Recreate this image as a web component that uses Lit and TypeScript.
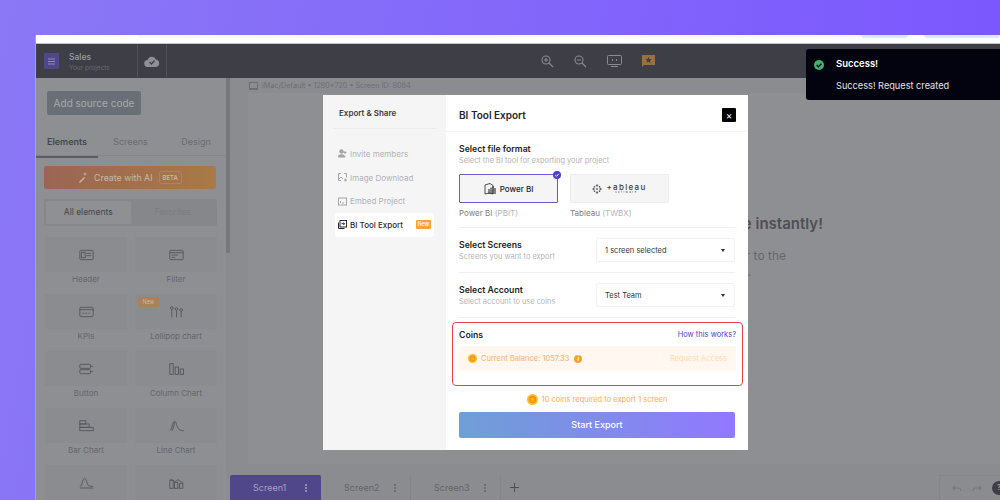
import { LitElement, html, css, svg } from 'lit';
import { customElement } from 'lit/decorators.js';

const tileIcons = {
  header: svg`<rect x="1" y="2" width="20" height="14" rx="1.5"/><rect x="3.5" y="5" width="5.500" height="8"/><path d="M11 6.500h7M11 10h7"/>`,
  filter: svg`<rect x="1" y="2" width="20" height="14" rx="1.5"/><path d="M1 5.500h20M4 9h9M4 12.500h5"/>`,
  kpi: svg`<rect x="1" y="2" width="20" height="14" rx="1.5"/><path d="M1 5.500h20M5 11h2.500M9.500 11h2.500M14 11h1.500"/>`,
  lollipop: svg`<circle cx="4" cy="3" r="2"/><path d="M4 5V17"/><circle cx="11" cy="4.500" r="2"/><path d="M11 6.500V17"/><circle cx="18" cy="6" r="2"/><path d="M18 8V17"/>`,
  button: svg`<rect x="1" y="2" width="16" height="6" rx="1"/><rect x="1" y="10" width="16" height="6" rx="1"/><path d="M18 5h3M18 13h3"/>`,
  column: svg`<rect x="1" y="1" width="5" height="16"/><rect x="9" y="6" width="5" height="11"/><rect x="16.500" y="9" width="5" height="8"/>`,
  bar: svg`<rect x="1" y="1" width="9" height="5"/><rect x="1" y="6" width="14" height="5"/><rect x="1" y="11" width="20" height="5"/>`,
  line: svg`<path d="M1 16c3 0 4-14 7-14s3 8 6 11 5 3 8 3"/><path d="M8 3c-1 6-2 11-4 13"/>`,
  area: svg`<path d="M1 14c4 0 4-12 7-12s4 10 6 11 4 1 7 1"/><path d="M1 16.500h20" stroke-width="3" opacity=".5"/>`,
  combo: svg`<rect x="1" y="5" width="5" height="12"/><rect x="8" y="8" width="5" height="9"/><rect x="15.500" y="10" width="5" height="7"/><path d="M2 3l7 4 4-3 8 5"/>`,
};

// the last row runs off the bottom of the page, so its labels never show
const tiles = [
  { name: 'Header', icon: 'header' },
  { name: 'Filter', icon: 'filter' },
  { name: 'KPIs', icon: 'kpi' },
  { name: 'Lollipop chart', icon: 'lollipop', fresh: true },
  { name: 'Button', icon: 'button' },
  { name: 'Column Chart', icon: 'column' },
  { name: 'Bar Chart', icon: 'bar' },
  { name: 'Line Chart', icon: 'line' },
  { name: '', icon: 'area' },
  { name: '', icon: 'combo' },
];

const coin = (size: number) => html`<svg class="coin" width=${size} height=${size} viewBox="0 0 12 12">
  <circle cx="6" cy="6" r="6" fill="#ffc21f"/>
  <circle cx="6" cy="6" r="4" fill="#f58d20"/>
  <path d="M6 3.2l.9 1.8 2 .3-1.4 1.4.3 2L6 7.8l-1.8.9.3-2L3.1 5.3l2-.3z" fill="#ffb52e"/>
</svg>`;

@customElement('app-root')
export class AppRoot extends LitElement {
  static styles = css`
    :host {
      display: block;
      width: 1000px;
      height: 500px;
      position: relative;
      overflow: hidden;
      box-sizing: border-box;
      padding: 35px 0 0 35px;
      background: linear-gradient(100deg, #8b78f6 0%, #7a55ff 100%);
      font-family: Inter, "Open Sans", sans-serif;
    }
    svg { display: block; flex: none; }

    .window {
      height: 465px;
      display: flex;
      flex-direction: column;
      border-left: 1px solid #3fe86f;
      background: #8e8f92;
    }
    .strip {
      height: 8px;
      flex: none;
      display: flex;
      background: #fff;
      border-bottom: 1px solid #c4c4c8;
    }
    .pill { height: 3px; border-radius: 0 0 6px 6px; }
    .pill.a { width: 725px; margin-left: 101px; background: #f8f8fd; }
    .pill.b { width: 47px; background: #dce6ff; }
    .pill.c { width: 76px; margin-left: 16px; background: #dce6ff; }

    .header {
      height: 34px;
      flex: none;
      display: flex;
      align-items: center;
      background: #3e3e46;
      color: #9b9ca0;
    }
    .menu {
      width: 15px;
      height: 16px;
      margin-left: 8px;
      background: #4f4789;
      border-radius: 1px;
      display: flex;
      align-items: center;
      justify-content: center;
    }
    .project { width: 68px; margin: 3px 0 0 10px; }
    .project b { display: block; font-size: 8.5px; font-weight: 500; line-height: 11px; }
    .project span { display: block; font-size: 6.5px; line-height: 11px; color: #6a6b70; }
    .cloud {
      width: 28px;
      height: 32px;
      display: flex;
      align-items: center;
      justify-content: center;
      border-left: 1px solid #515158;
      border-right: 1px solid #515158;
    }
    .tools { display: flex; align-items: center; margin-left: 374px; gap: 20px; }

    .body { flex: 1; display: flex; min-height: 0; }
    .sidebar {
      width: 190px;
      flex: none;
      box-sizing: border-box;
      overflow: hidden;
      background: #8e8f92;
    }
    .source {
      width: 94px;
      height: 24px;
      margin: 13px 0 0 11px;
      border-radius: 2px;
      background: #6a6f77;
      color: #a6a8aa;
      font-size: 10px;
      line-height: 24px;
      text-align: center;
    }
    .tabs {
      height: 40px;
      box-sizing: border-box;
      margin-top: 1px;
      padding-top: 20px;
      display: flex;
      font-size: 9px;
      color: #6b6c70;
      border-bottom: 1px solid #85868a;
    }
    .tabs span { flex: none; width: 65px; text-align: center; }
    .tabs span:first-child {
      width: 62px;
      height: 20px;
      font-weight: 600;
      color: #46474c;
      border-bottom: 2px solid #5d5e63;
    }
    .tabs span:last-child { width: 66px; }
    .ai {
      height: 23px;
      margin: 10px 10px 0 8px;
      border-radius: 2px;
      display: flex;
      align-items: center;
      justify-content: center;
      gap: 6px;
      color: #c2b8ab;
      font-size: 8.8px;
      background: linear-gradient(90deg, #9b6555, #a87a45);
    }
    .ai em {
      font-style: normal;
      font-size: 6px;
      font-weight: 600;
      padding: 2px 3px;
      border: 1px solid #ae8260;
      border-radius: 2px;
    }
    .segment {
      height: 27px;
      box-sizing: border-box;
      margin: 10px 9px 0 8px;
      padding: 2px;
      display: flex;
      border-radius: 2px;
      background: #86878a;
      font-size: 8.5px;
      line-height: 23px;
      text-align: center;
      color: #7c7d80;
    }
    .segment span { flex: 1; }
    .segment span:first-child { background: #8f9093; color: #45464d; border-radius: 2px; }
    .grid {
      margin: 11px 9px 0 9px;
      display: grid;
      grid-template-columns: 82px 82px;
      column-gap: 8px;
    }
    .item { height: 57px; position: relative; }
    .tile {
      height: 35px;
      background: #8b8c8f;
      display: flex;
      align-items: center;
      justify-content: center;
    }
    .tile svg { fill: none; stroke: #56575c; stroke-width: 1.4; }
    .name {
      height: 14px;
      line-height: 14px;
      text-align: center;
      font-size: 8px;
      color: #65666b;
    }
    .badge {
      position: absolute;
      left: 3px;
      top: 3px;
      width: 21px;
      height: 10px;
      border-radius: 1px;
      background: #ab8156;
      color: #c9b9a6;
      font-size: 5.5px;
      line-height: 10px;
      text-align: center;
    }
    .track { width: 4px; flex: none; background: #8b8c8f; }
    .track div { width: 4px; height: 175px; background: #77787c; }

    .main { flex: 1; min-width: 0; display: flex; flex-direction: column; background: #8b8c8f; }
    .info {
      height: 15px;
      flex: none;
      display: flex;
      align-items: center;
      gap: 4px;
      margin-left: 19px;
      font-size: 7.2px;
      color: #6d6e72;
    }
    .canvas {
      flex: 1;
      margin: 0 0 11px 18px;
      background: #8e8f92;
      display: flex;
      flex-direction: column;
      align-items: flex-end;
      color: #4e4f54;
      white-space: nowrap;
    }
    .hero { margin: 121px 177px 0 0; font-size: 15px; line-height: 20px; font-weight: 600; }
    .line { margin: 12px 214px 0 0; font-size: 12px; line-height: 20px; color: #66676b; }
    .dot { margin: -4px 249px 0 0; font-size: 12px; line-height: 20px; color: #66676b; }
    .tabbar {
      height: 25px;
      flex: none;
      display: flex;
      align-items: center;
      font-size: 9px;
      color: #64656a;
    }
    .screen {
      width: 90px;
      height: 100%;
      box-sizing: border-box;
      padding: 0 14px 0 23px;
      display: flex;
      align-items: center;
      justify-content: space-between;
      border-right: 1px solid #85868a;
    }
    .screen.on { background: #4f4789; color: #a5a3bd; border-radius: 2px 2px 0 0; border: none; width: 91px; }
    .dots { width: 2px; height: 2px; background: currentColor; border-radius: 50%; box-shadow: 0 -3px currentColor, 0 3px currentColor; }
    .plus { margin-left: 9px; }
    .actions {
      margin-left: auto;
      width: 61px;
      height: 100%;
      box-sizing: border-box;
      padding-left: 12px;
      display: flex;
      align-items: center;
      gap: 10px;
      border-left: 1px solid #85868a;
      border-top: 1px solid #85868a;
    }
    .help {
      width: 14px;
      height: 14px;
      flex: none;
      border-radius: 50%;
      background: #3e3e46;
      color: #9b9ca0;
      font-size: 7px;
      font-weight: 700;
      line-height: 14px;
      text-align: center;
    }

    .modal {
      position: absolute;
      left: 323px;
      top: 95px;
      width: 425px;
      height: 355px;
      display: flex;
      background: #fff;
      color: #24242a;
    }
    .nav { width: 123px; flex: none; background: #f5f5f5; box-sizing: border-box; padding: 0 12px; }
    .nav h3 {
      margin: 0 -2px 0 -2px;
      padding: 12px 0 10px 6px;
      height: 34px;
      box-sizing: border-box;
      border-bottom: 1px solid #ececec;
      font-size: 8px;
      line-height: 12px;
      font-weight: 600;
      color: #3c3c42;
    }
    .navlist { margin: 13px 0 0; display: flex; flex-direction: column; }
    .navitem {
      height: 23.7px;
      width: 99px;
      box-sizing: border-box;
      padding: 0 3px;
      display: flex;
      align-items: center;
      gap: 3px;
      font-size: 8px;
      color: #b2b2b5;
      border-radius: 3px;
    }
    .navitem svg { fill: none; stroke: #a5a5a8; stroke-width: 1; }
    .navitem.on { background: #fff; color: #2b2b33; font-weight: 500; }
    .navitem.on svg { stroke: #2b2b33; }
    .new {
      margin-left: auto;
      width: 15px;
      height: 9px;
      background: #ffa033;
      color: #fff;
      font-size: 5.5px;
      line-height: 9px;
      text-align: center;
      border-radius: 1px;
    }

    .pane { flex: 1; min-width: 0; display: flex; flex-direction: column; }
    .title {
      height: 37px;
      flex: none;
      box-sizing: border-box;
      padding: 4px 12px 0 13px;
      display: flex;
      align-items: center;
      justify-content: space-between;
      border-bottom: 1px solid #f3f3f3;
      font-size: 10px;
      font-weight: 600;
    }
    .close {
      width: 14px;
      height: 14px;
      background: #000;
      border-radius: 1px;
      color: #fff;
      font-size: 10px;
      line-height: 14px;
      text-align: center;
      font-weight: 400;
    }
    .content { padding: 0 13px; }
    h4 { margin: 0; font-size: 8.7px; line-height: 12px; font-weight: 600; color: #24242a; }
    .sub { font-size: 7.4px; line-height: 12px; color: #b4b4b8; }
    .format { height: 96px; box-sizing: border-box; padding-top: 11px; border-bottom: 1px solid #f0f0f0; }
    .cards { display: flex; gap: 12px; margin-top: 7px; }
    .card { width: 99px; }
    .box {
      height: 29px;
      box-sizing: border-box;
      position: relative;
      display: flex;
      align-items: center;
      justify-content: center;
      gap: 4px;
      background: #f5f5f5;
      border: 1px solid #eee;
      border-radius: 1px;
      font-size: 8px;
      font-weight: 500;
    }
    .box.on { border-color: #6a5ad8; }
    .tick { position: absolute; right: -4px; top: -4px; }
    .wordmark { display: flex; flex-direction: column; align-items: center; }
    .wordmark b { font-size: 8px; line-height: 8px; font-weight: 500; letter-spacing: 1.3px; color: #3a3a3e; }
    .wordmark span { font-size: 2.5px; line-height: 3px; letter-spacing: 1.5px; color: #55555a; }
    .ftype { margin-top: 4px; font-size: 8px; line-height: 12px; color: #7c7c82; }
    .ftype span { color: #b4b4b8; }
    .row {
      height: 45px;
      box-sizing: border-box;
      display: flex;
      align-items: center;
      justify-content: space-between;
      border-bottom: 1px solid #f0f0f0;
    }
    .row > div:first-child { margin-top: 2px; }
    .select {
      width: 139px;
      height: 24px;
      box-sizing: border-box;
      padding: 0 9px 0 8px;
      display: flex;
      align-items: center;
      justify-content: space-between;
      border: 1px solid #f2f2f2;
      border-radius: 2px;
      font-size: 7.5px;
      color: #33333a;
    }
    .caret { border: 2.5px solid transparent; border-top: 3px solid #2b2b33; border-bottom: 0; }
    .coins {
      margin: 4px 5px 0 6px;
      height: 64px;
      box-sizing: border-box;
      padding: 0 6px;
      border: 1.5px solid #e8404a;
      border-radius: 4px;
    }
    .coinhead {
      height: 23px;
      display: flex;
      align-items: center;
      justify-content: space-between;
    }
    .coinhead a { font-size: 7.5px; color: #4b3fd0; }
    .balance {
      height: 25px;
      box-sizing: border-box;
      padding: 0 9px;
      display: flex;
      align-items: center;
      gap: 4px;
      background: #fff7f0;
      font-size: 7.5px;
      color: #ffb066;
    }
    .balance i {
      width: 8px;
      height: 8px;
      margin-left: 1px;
      border-radius: 50%;
      background: #f9a02d;
      color: #fff;
      font-size: 6px;
      font-weight: 700;
      font-style: normal;
      line-height: 8px;
      text-align: center;
    }
    .balance span { margin-left: auto; color: #ffdcb0; }
    .need {
      height: 26px;
      display: flex;
      align-items: center;
      justify-content: center;
      gap: 4px;
      font-size: 7.5px;
      color: #ffab55;
    }
    .start {
      height: 26px;
      border-radius: 2px;
      background: linear-gradient(90deg, #6f9fd6, #9278ff);
      color: #fff;
      font-size: 9px;
      font-weight: 500;
      line-height: 26px;
      text-align: center;
    }

    .toast {
      position: absolute;
      left: 806px;
      top: 49px;
      width: 194px;
      height: 51px;
      box-sizing: border-box;
      padding: 8px 0 0 30px;
      border-radius: 3px 0 0 3px;
      background: #03030f;
      color: #e4e4ea;
      font-size: 9.2px;
    }
    .toast b { display: block; color: #fff; font-size: 9.5px; font-weight: 600; line-height: 13px; margin-bottom: 10px; }
    .toast svg { position: absolute; left: 8px; top: 11px; }
  `;

  render() {
    return html`
      <div class="window">
        <div class="strip"><div class="pill a"></div><div class="pill b"></div><div class="pill c"></div></div>
        <div class="header">
          <div class="menu">
            <svg width="7" height="7" viewBox="0 0 7 7" fill="none" stroke="#8f8ab0"><path d="M0 1h7M0 3.5h7M0 6h7"/></svg>
          </div>
          <div class="project"><b>Sales</b><span>Your projects</span></div>
          <div class="cloud">
            <svg width="16" height="11" viewBox="0 0 16 11">
              <path d="M4 11a3.5 3.5 0 0 1-.5-7A4.5 4.5 0 0 1 12 3.5a3.8 3.8 0 0 1 0 7.5z" fill="#8f9094"/>
              <path d="M5.5 6l2 2 3-3.5" fill="none" stroke="#3e3e46" stroke-width="1.2"/>
            </svg>
          </div>
          <div class="tools">
            <svg width="13" height="13" viewBox="0 0 13 13" fill="none" stroke="#8a8b90" stroke-width="1.1"><circle cx="5" cy="5" r="4"/><path d="M3 5h4M5 3v4M8 8l4 4"/></svg>
            <svg width="13" height="13" viewBox="0 0 13 13" fill="none" stroke="#8a8b90" stroke-width="1.1"><circle cx="5" cy="5" r="4"/><path d="M3 5h4M8 8l4 4"/></svg>
            <svg width="15" height="12" viewBox="0 0 15 12" fill="none" stroke="#8a8b90"><rect x=".5" y=".5" width="14" height="9" rx="1"/><path d="M4 11.5h7M6 4l-1 1 1 1M9 4l1 1-1 1"/></svg>
            <svg width="13" height="12" viewBox="0 0 13 12"><path d="M0 0h13v10H2l-2 2z" fill="#9c6f3c"/><path d="M6.500 2l1 2 2 .3-1.500 1.400.4 2-1.900-1-1.900 1 .4-2L3.500 4.300l2-.3z" fill="#3e3e46"/></svg>
          </div>
        </div>
        <div class="body">
          <div class="sidebar">
            <div class="source">Add source code</div>
            <div class="tabs"><span>Elements</span><span>Screens</span><span>Design</span></div>
            <div class="ai">
              <svg width="10" height="11" viewBox="0 0 10 11" fill="#c2b8ab"><path d="M1 10l5-5 1 1-5 5z"/><path d="M7 0l.6 1.400L9 2l-1.400.6L7 4l-.6-1.400L5 2l1.400-.6z"/></svg>
              Create with AI <em>BETA</em>
            </div>
            <div class="segment"><span>All elements</span><span>Favorites</span></div>
            <div class="grid">
              ${tiles.map(t => html`
                <div class="item">
                  <div class="tile">
                    <svg width="15" height="12" viewBox="0 0 22 18">${tileIcons[t.icon as keyof typeof tileIcons]}</svg>
                  </div>
                  ${t.name ? html`<div class="name">${t.name}</div>` : ''}
                  ${t.fresh ? html`<div class="badge">New</div>` : ''}
                </div>
              `)}
            </div>
          </div>
          <div class="track"><div></div></div>
          <div class="main">
            <div class="info">
              <svg width="9" height="8" viewBox="0 0 9 8" fill="none" stroke="#6d6e72"><rect x=".5" y=".5" width="8" height="6"/><path d="M0 7.500h9"/></svg>
              iMac/Default • 1280*720 • Screen ID: 8084
            </div>
            <div class="canvas">
              <div class="hero">e instantly!</div>
              <div class="line">r to the</div>
              <div class="dot">.</div>
            </div>
            <div class="tabbar">
              <div class="screen on">Screen1<span class="dots"></span></div>
              <div class="screen">Screen2<span class="dots"></span></div>
              <div class="screen">Screen3<span class="dots"></span></div>
              <svg class="plus" width="9" height="9" viewBox="0 0 9 9" stroke="#4e4f54"><path d="M4.500 0v9M0 4.500h9"/></svg>
              <div class="actions">
                <svg width="10" height="7" viewBox="0 0 10 7" fill="none" stroke="#77787c" stroke-width="1.2"><path d="M3 1L1 3l2 2M1 3h5c2 0 3 1 3 3"/></svg>
                <svg width="10" height="7" viewBox="0 0 10 7" fill="none" stroke="#77787c" stroke-width="1.2"><path d="M7 1l2 2-2 2M9 3H4C2 3 1 4 1 6"/></svg>
                <div class="help">?</div>
              </div>
            </div>
          </div>
        </div>
      </div>

      <div class="modal">
        <div class="nav">
          <h3>Export &amp; Share</h3>
          <div class="navlist">
            <div class="navitem">
              <svg width="9" height="9" viewBox="0 0 9 9"><circle cx="3.500" cy="2.500" r="1.800" fill="#a5a5a8"/><path d="M0 8c0-3 7-3 7 0z" fill="#a5a5a8"/><path d="M7 2v3M5.500 3.500h3"/></svg>
              Invite members
            </div>
            <div class="navitem">
              <svg width="9" height="9" viewBox="0 0 9 9"><path d="M3 .5H.5v7H3M6 .5h2.500v4M1 6l2-2 2 2M6 7h3M7.500 5.500v3"/></svg>
              Image Download
            </div>
            <div class="navitem">
              <svg width="9" height="9" viewBox="0 0 9 9"><rect x=".5" y="1" width="8" height="7"/><path d="M2 4l1 1-1 1M4 6h2"/></svg>
              Embed Project
            </div>
            <div class="navitem on">
              <svg width="9" height="9" viewBox="0 0 9 9"><rect x="2" y=".5" width="6.500" height="6.500"/><path d="M.5 2.500v6h6M3.500 3.700h3M5.500 2.500l1 1.200-1 1.200"/></svg>
              BI Tool Export
              <span class="new">New</span>
            </div>
          </div>
        </div>
        <div class="pane">
          <div class="title">BI Tool Export <div class="close">×</div></div>
          <div class="content">
            <div class="format">
              <h4>Select file format</h4>
              <div class="sub">Select the BI tool for exporting your project</div>
              <div class="cards">
                <div class="card">
                  <div class="box on">
                    <svg width="12" height="12" viewBox="0 0 12 12" fill="none" stroke="#3a3a3e" stroke-width=".9"><path d="M1 2l5-1.500 3 2V11L5 10 1 11z"/><path d="M5 6v5M7 4.500V11M9 3v8M11 5v6" stroke-width="1.200"/></svg>
                    Power BI
                    <svg class="tick" width="8" height="8" viewBox="0 0 8 8"><circle cx="4" cy="4" r="4" fill="#4a3fd0"/><path d="M2.200 4l1.300 1.300L5.800 2.800" fill="none" stroke="#fff"/></svg>
                  </div>
                  <div class="ftype">Power BI <span>(PBIT)</span></div>
                </div>
                <div class="card">
                  <div class="box">
                    <svg width="10" height="10" viewBox="0 0 10 10" fill="none" stroke="#55555a" stroke-width=".8"><path d="M5 0v3M3.800 1.500h2.400M5 7v3M3.800 8.500h2.400M0 5h3M1.500 3.800v2.400M7 5h3M8.500 3.800v2.400M2.500 2v1.600M1.700 2.800h1.600M7.500 2v1.600M6.700 2.800h1.600M2.500 6.400V8M1.700 7.200h1.600M7.500 6.400V8M6.700 7.200h1.600M4 5h2M5 4v2"/></svg>
                    <span class="wordmark"><b>+ableau</b><span>software</span></span>
                  </div>
                  <div class="ftype">Tableau <span>(TWBX)</span></div>
                </div>
              </div>
            </div>
            <div class="row">
              <div><h4>Select Screens</h4><div class="sub">Screens you want to export</div></div>
              <div class="select">1 screen selected <span class="caret"></span></div>
            </div>
            <div class="row">
              <div><h4>Select Account</h4><div class="sub">Select account to use coins</div></div>
              <div class="select">Test Team <span class="caret"></span></div>
            </div>
          </div>
          <div class="coins">
            <div class="coinhead"><h4>Coins</h4><a>How this works?</a></div>
            <div class="balance">
              ${coin(9)} Current Balance: 1057.33 <i>i</i>
              <span>Request Access</span>
            </div>
          </div>
          <div class="need">${coin(11)} 10 coins required to export 1 screen</div>
          <div class="content"><div class="start">Start Export</div></div>
        </div>
      </div>

      <div class="toast">
        <svg width="10" height="10" viewBox="0 0 10 10"><circle cx="5" cy="5" r="5" fill="#3cb371"/><path d="M2.700 5l1.700 1.700 3-3" fill="none" stroke="#03030f" stroke-width="1.400"/></svg>
        <b>Success!</b>
        Success! Request created
      </div>
    `;
  }
}
